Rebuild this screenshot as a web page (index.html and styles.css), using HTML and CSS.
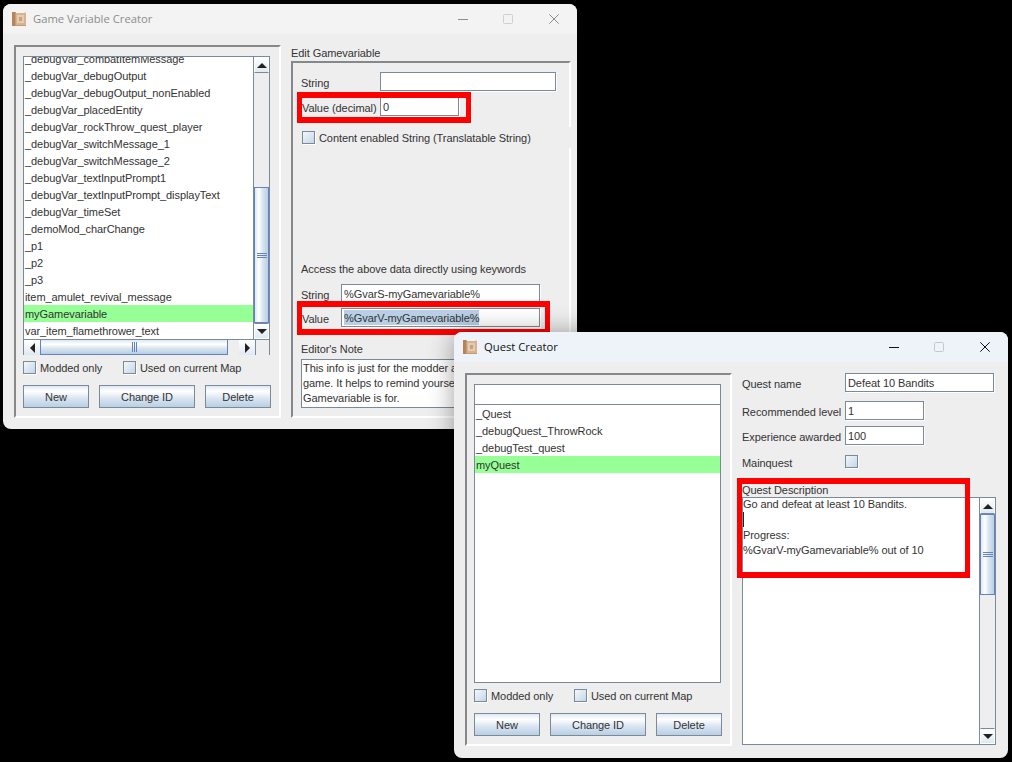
FILE: index.html
```html
<!DOCTYPE html>
<html lang="en">
<head>
<meta charset="utf-8">
<title>Game Variable Creator</title>
<link rel="stylesheet" href="styles.css">
</head>
<body>

<svg class="defs" width="0" height="0" aria-hidden="true">
  <symbol id="book" viewBox="0 0 14 14">
    <rect x="1" y="1" width="13" height="13" fill="#d6b491"/>
    <rect x="0" y="0" width="3" height="14" fill="#b5845a"/>
    <rect x="3" y="0" width="1" height="14" fill="#c79c74"/>
    <rect x="5" y="3" width="7" height="8" fill="#e3ccb3"/>
    <rect x="7" y="5" width="3" height="4" fill="#c9a27d"/>
    <rect x="4" y="13" width="10" height="1" fill="#c39a73"/>
    <rect x="12" y="0" width="2" height="1" fill="#ead9c6"/>
  </symbol>
  <symbol id="win-min" viewBox="0 0 10 10"><path d="M0 5.5H10" stroke="currentColor" fill="none"/></symbol>
  <symbol id="win-max" viewBox="0 0 10 10"><rect x=".5" y=".5" width="9" height="9" rx="1" stroke="currentColor" fill="none"/></symbol>
  <symbol id="win-close" viewBox="0 0 10 10"><path d="M.3 .3L9.7 9.7M9.7 .3L.3 9.7" stroke="currentColor" fill="none"/></symbol>
</svg>

<section class="win win-vars">
  <header class="title inactive">
    <svg class="app-icon"><use href="#book"/></svg>
    <span class="title-text">Game Variable Creator</span>
    <svg class="ctl ctl-min"><use href="#win-min"/></svg>
    <svg class="ctl ctl-max"><use href="#win-max"/></svg>
    <svg class="ctl ctl-close"><use href="#win-close"/></svg>
  </header>
  <div class="body">
    <div class="panel left-panel">
      <div class="list">
        <div class="list-main">
          <div class="list-view">
            <div class="rows rows-clipped">
              <div class="row">_debugVar_combatItemMessage</div>
              <div class="row">_debugVar_debugOutput</div>
              <div class="row">_debugVar_debugOutput_nonEnabled</div>
              <div class="row">_debugVar_placedEntity</div>
              <div class="row">_debugVar_rockThrow_quest_player</div>
              <div class="row">_debugVar_switchMessage_1</div>
              <div class="row">_debugVar_switchMessage_2</div>
              <div class="row">_debugVar_textInputPrompt1</div>
              <div class="row">_debugVar_textInputPrompt_displayText</div>
              <div class="row">_debugVar_timeSet</div>
              <div class="row">_demoMod_charChange</div>
              <div class="row">_p1</div>
              <div class="row">_p2</div>
              <div class="row">_p3</div>
              <div class="row">item_amulet_revival_message</div>
              <div class="row selected">myGamevariable</div>
              <div class="row">var_item_flamethrower_text</div>
            </div>
          </div>
          <div class="vbar">
            <div class="sb-btn"><i class="arrow up"></i></div>
            <div class="vtrack vars-track"><div class="vthumb vars-thumb"><i class="grip-h"></i></div></div>
            <div class="sb-btn"><i class="arrow down"></i></div>
          </div>
        </div>
        <div class="hbar">
          <div class="sb-btn-h"><i class="arrow left"></i></div>
          <div class="hthumb"><i class="grip-v"></i></div>
          <div class="htrack"></div>
          <div class="sb-btn-h"><i class="arrow right"></i></div>
          <div class="corner"></div>
        </div>
      </div>
      <div class="checks">
        <label class="check"><i class="box"></i>Modded only</label>
        <label class="check"><i class="box"></i>Used on current Map</label>
      </div>
      <div class="buttons">
        <div class="btn btn-s">New</div>
        <div class="btn btn-l">Change ID</div>
        <div class="btn btn-s">Delete</div>
      </div>
    </div>

    <div class="edit-col">
      <div class="edit-label">Edit Gamevariable</div>
      <div class="panel edit-panel">
        <div class="frow"><span class="lab lab-79">String</span><div class="field f-176"></div></div>
        <div class="frow gap6"><span class="lab lab-79 nudge">Value (decimal)</span><div class="field f-79">0</div></div>
        <div class="check-row"><label class="check"><i class="box"></i>Content enabled String (Translatable String)</label></div>
        <div class="access">Access the above data directly using keywords</div>
        <div class="frow gap8"><span class="lab lab-40">String</span><div class="field f-199">%GvarS-myGamevariable%</div></div>
        <div class="frow gap5"><span class="lab lab-40 nudge">Value</span><div class="field f-199"><span class="sel">%GvarV-myGamevariable%</span></div></div>
        <div class="note-label">Editor's Note</div>
        <div class="note">
          <div>This info is just for the modder and won't appear in the</div>
          <div>game. It helps to remind yourself what this</div>
          <div>Gamevariable is for.</div>
        </div>
      </div>
    </div>
  </div>
  <div class="mark mark-value"></div>
  <div class="mark mark-key"></div>
</section>

<section class="win win-quest">
  <header class="title active">
    <svg class="app-icon"><use href="#book"/></svg>
    <span class="title-text">Quest Creator</span>
    <svg class="ctl ctl-min"><use href="#win-min"/></svg>
    <svg class="ctl ctl-max"><use href="#win-max"/></svg>
    <svg class="ctl ctl-close"><use href="#win-close"/></svg>
  </header>
  <div class="body">
    <div class="panel left-panel">
      <div class="list list-plain">
        <div class="search"></div>
        <div class="row">_Quest</div>
        <div class="row">_debugQuest_ThrowRock</div>
        <div class="row">_debugTest_quest</div>
        <div class="row selected">myQuest</div>
      </div>
      <div class="checks">
        <label class="check"><i class="box"></i>Modded only</label>
        <label class="check"><i class="box"></i>Used on current Map</label>
      </div>
      <div class="buttons">
        <div class="btn btn-s">New</div>
        <div class="btn btn-l">Change ID</div>
        <div class="btn btn-s">Delete</div>
      </div>
    </div>

    <div class="quest-col">
      <div class="frow"><span class="lab lab-103">Quest name</span><div class="field f-149">Defeat 10 Bandits</div></div>
      <div class="frow gap9"><span class="lab lab-103">Recommended level</span><div class="field f-79">1</div></div>
      <div class="frow gap6"><span class="lab lab-103">Experience awarded</span><div class="field f-79">100</div></div>
      <div class="frow main-row"><span class="lab lab-103">Mainquest</span><i class="box"></i></div>
      <div class="desc-label">Quest Description</div>
      <div class="desc">
        <div class="desc-text">
          <div>Go and defeat at least 10 Bandits.</div>
          <div><i class="caret"></i></div>
          <div>Progress:</div>
          <div>%GvarV-myGamevariable% out of 10</div>
        </div>
        <div class="vbar">
          <div class="sb-btn"><i class="arrow up"></i></div>
          <div class="vtrack"><div class="vthumb desc-thumb"><i class="grip-h"></i></div></div>
          <div class="sb-btn"><i class="arrow down"></i></div>
        </div>
      </div>
    </div>
  </div>
  <div class="mark mark-desc"></div>
</section>

</body>
</html>
```

FILE: styles.css
```css
* { box-sizing: border-box; }
html, body { margin: 0; padding: 0; }
body {
  width: 1012px;
  height: 762px;
  background: #000;
  overflow: hidden;
  position: relative;
  font: 11px/14px "Liberation Sans", Arial, sans-serif;
  letter-spacing: -.07px;
  color: #333;
}
.defs { position: absolute; }

/* windows sit on a free desktop */
.win {
  position: absolute;
  background: #eee;
  border-radius: 8px;
  overflow: visible;
}
.win-vars { left: 3px; top: 4px; width: 574px; height: 425px; }
.win-quest { left: 454px; top: 332px; width: 554px; height: 426px; box-shadow: 0 1px 26px rgba(0,0,0,.38); }

.title {
  height: 30px;
  display: flex;
  align-items: center;
  padding-left: 9px;
  border-radius: 8px 8px 0 0;
}
.title.inactive { background: #f3f3f3; color: #8c8c8c; }
.title.active { background: #eef3fa; color: #111; }
.app-icon { width: 14px; height: 14px; }
.title-text {
  margin-left: 7px;
  flex: 1;
  font: 11.25px/16px "Open Sans", sans-serif;
  letter-spacing: 0;
}
.ctl { width: 10px; height: 10px; display: block; }
.ctl-min { margin-right: 35px; }
.ctl-max { margin-right: 36px; color: #d0d0d0; }
.ctl-close { margin-right: 18px; }
.inactive .ctl-min, .inactive .ctl-close { color: #8c8c8c; }
.active .ctl-min, .active .ctl-close { color: #111; }
.active .ctl-max { color: #c4c8ce; }

.body {
  display: flex;
  gap: 10px;
  padding: 11px 0 0 11px;
}

.panel {
  border: 2px solid;
  border-color: #85898c #fff #fff #85898c;
}
.left-panel {
  width: 267px;
  height: 373px;
  padding: 9px 7px 0;
  flex: none;
}

/* lists */
.list {
  width: 247px;
  height: 299px;
  border: 1px solid #7a8a99;
  background: #fff;
  display: flex;
  flex-direction: column;
}
.list-main { display: flex; height: 282px; }
.list-view { flex: 1; overflow: hidden; }
.rows-clipped { margin-top: -7px; }
.row {
  height: 17px;
  line-height: 17px;
  padding: 1px 0 0 1px;
  white-space: nowrap;
  color: #333;
}
.row.selected { background: #96ff96; }
.list-plain { overflow: hidden; }
.search {
  height: 21px;
  border-top: 1px solid #7a8a99;
  border-bottom: 1px solid #7a8a99;
  margin-top: -1px;
  flex: none;
}

/* scrollbars */
.vbar {
  width: 16px;
  flex: none;
  display: flex;
  flex-direction: column;
  border-left: 1px solid #7a8a99;
  background: #eee;
}
.sb-btn {
  height: 16px;
  flex: none;
  display: flex;
  align-items: center;
  justify-content: center;
  background: linear-gradient(#fff, #dfe9f3);
  border: 1px solid #fff;
  border-bottom-color: #7a8a99;
}
.vbar .sb-btn:last-child { border-top-color: #7a8a99; border-bottom-color: #fff; }
.vtrack { flex: 1; background: #eee; min-height: 0; }
.vars-track { padding-top: 114px; }
.vthumb {
  display: flex;
  align-items: center;
  justify-content: center;
  background: linear-gradient(90deg, #dde8f3, #fff 30%, #d8e4f0 60%, #b8cfe5);
  border: 1px solid #6382bf;
}
.vars-thumb { height: 136px; }
.desc-thumb { height: 81px; }
.grip-h {
  width: 10px;
  height: 5px;
  border-top: 1px solid #6382bf;
  border-bottom: 1px solid #6382bf;
  position: relative;
}
.grip-h::before {
  content: "";
  display: block;
  height: 1px;
  margin-top: 1px;
  background: #6382bf;
}
.hbar {
  height: 16px;
  display: flex;
  flex: none;
  border-top: 1px solid #7a8a99;
  background: #eee;
}
.sb-btn-h {
  width: 16px;
  flex: none;
  display: flex;
  align-items: center;
  justify-content: center;
  background: linear-gradient(#fff, #dfe9f3);
}
.hthumb {
  width: 188px;
  flex: none;
  display: flex;
  align-items: center;
  justify-content: center;
  background: linear-gradient(#dde8f3, #fff 30%, #d8e4f0 60%, #b8cfe5);
  border: 1px solid #6382bf;
  border-width: 0 1px 1px;
}
.grip-v {
  width: 5px;
  height: 10px;
  border-left: 1px solid #6382bf;
  border-right: 1px solid #6382bf;
  display: flex;
  justify-content: center;
}
.grip-v::before { content: ""; width: 1px; background: #6382bf; }
.htrack { width: 11px; flex: none; }
.corner { flex: 1; border-left: 1px solid #7a8a99; }
.arrow { display: block; width: 0; height: 0; border-style: solid; border-color: transparent; }
.arrow.up { border-width: 0 5px 5px; border-bottom-color: #222; }
.arrow.down { border-width: 5px 5px 0; border-top-color: #222; }
.arrow.left { border-width: 5px 5px 5px 0; border-right-color: #222; }
.arrow.right { border-width: 5px 0 5px 5px; border-left-color: #222; }

/* checkboxes, buttons */
.checks { display: flex; margin-top: 6px; height: 13px; }
.check { display: flex; align-items: center; white-space: nowrap; }
.checks .check { width: 100px; }
.box {
  display: block;
  width: 13px;
  height: 13px;
  flex: none;
  margin-right: 4px;
  border: 1px solid #7a8a99;
  background: linear-gradient(135deg, #f4f7fb, #c4d6e8);
  box-shadow: 1px 1px 0 #fff;
}
.buttons { display: flex; gap: 10px; margin-top: 11px; }
.btn {
  height: 23px;
  line-height: 21px;
  padding-top: 1px;
  text-align: center;
  border: 1px solid #7a8a99;
  background: linear-gradient(#dde8f3, #fff 25%, #d8e4f0 60%, #b8cfe5);
}
.btn-s { width: 66px; }
.btn-l { width: 96px; }

/* form rows */
.frow { display: flex; align-items: center; flex: none; }
.gap5 { margin-top: 5px; }
.gap6 { margin-top: 6px; }
.gap8 { margin-top: 8px; }
.gap9 { margin-top: 9px; }
.lab { flex: none; padding-top: 3px; white-space: nowrap; }
.nudge { padding-left: 1px; }
.lab-79 { width: 79px; }
.lab-40 { width: 40px; }
.lab-103 { width: 103px; }
.field {
  height: 19px;
  line-height: 17px;
  padding: 1px 0 0 2px;
  background: #fff;
  border: 1px solid #7a8a99;
  box-shadow: 1px 1px 0 #fff;
  white-space: nowrap;
  flex: none;
}
.f-79 { width: 79px; }
.f-149 { width: 149px; }
.f-176 { width: 176px; }
.f-199 { width: 199px; }
.sel { display: block; width: fit-content; height: 15px; line-height: 17px; background: #b8cfe5; }

/* edit column */
.edit-col { width: 280px; flex: none; }
.edit-label { height: 16px; line-height: 16px; margin-top: 0; }
.edit-panel {
  height: 357px;
  padding: 9px 0 0 8px;
  display: flex;
  flex-direction: column;
}
.check-row {
  height: 21px;
  margin-top: 11px;
  margin-right: -2px;
  position: relative;
  background: #eee;
  display: flex;
  align-items: center;
  padding-left: 1px;
  flex: none;
}
.access { margin-top: 114px; height: 14px; flex: none; }
.note-label { margin-top: 15px; height: 14px; flex: none; }
.note {
  width: 255px;
  height: 49px;
  margin-top: 3px;
  padding-top: 1px;
  padding-left: 1px;
  background: #fff;
  border: 1px solid #7a8a99;
  border-width: 1px 0 1px 1px;
  line-height: 15px;
  white-space: nowrap;
  overflow: hidden;
  flex: none;
}

/* quest column */
.quest-col { display: flex; flex-direction: column; width: 254px; }
.main-row { margin-top: 8px; height: 17px; }
.main-row .lab { padding-top: 2px; }
.main-row .box { margin: 0; }
.desc-label { margin-top: 13px; height: 14px; line-height: 14px; flex: none; }
.desc {
  height: 248px;
  display: flex;
  background: #fff;
  border: 1px solid #7a8a99;
  flex: none;
}
.desc-text { flex: 1; line-height: 15.4px; margin-top: -1px; }
.desc-text > div { height: 15.4px; white-space: nowrap; }
.caret { display: block; width: 1px; height: 15px; background: #222; }

/* red annotations laid over the windows */
.mark { position: absolute; border: 5px solid #f00; border-top-width: 6px; border-bottom-width: 6px; }
.mark-value { left: 294px; top: 88px; width: 174px; height: 31px; }
.mark-key { left: 294px; top: 297px; width: 253px; height: 34px; }
.mark-desc { left: 283px; top: 146px; width: 233px; height: 100px; }
```
